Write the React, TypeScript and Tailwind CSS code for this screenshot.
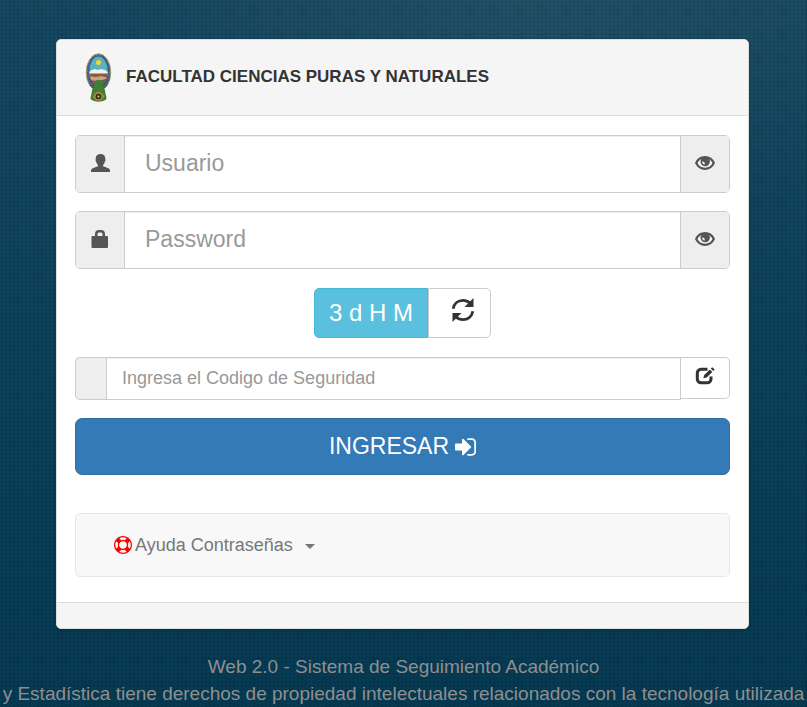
import { useState } from 'react'
import type { ReactNode } from 'react'

export default function App() {
  return (
    <div className="min-h-screen overflow-hidden bg-[radial-gradient(circle_at_center,rgba(0,25,45,0.2)_0_1px,transparent_2px),radial-gradient(circle_at_14px_11px,rgba(0,20,40,0.14)_0_1px,transparent_2px_3px,rgba(0,20,40,0.12)_4px,transparent_5px),radial-gradient(ellipse_420px_240px_at_65%_0,rgba(70,105,120,0.28),transparent),linear-gradient(#174a63,#0c435c_50%,#063b54)] bg-[length:4px_4px,24px_24px,100%_100%,100%_100%] pt-[39px] font-['Liberation_Sans',Arial,sans-serif] text-lg text-[#333]">
      <main className="mr-[58px] ml-14 overflow-hidden rounded-[5px] border border-[#ddd] bg-white shadow-sm">
        <header className="flex h-[76px] items-center border-b border-[#ddd] bg-[#f5f5f5] pl-7">
          <Escudo />
          <h1 className="ml-[14px] text-[17px] font-bold">FACULTAD CIENCIAS PURAS Y NATURALES</h1>
        </header>

        <form className="px-[18px] pt-[19px] pb-[25px]" onSubmit={(e) => e.preventDefault()}>
          <Campo id="usuario" label="Usuario" icon={<IconUser />} />
          <Campo id="password" label="Password" icon={<IconLock />} />

          <div className="mb-[19px] flex h-[50px] justify-center">
            <span className="flex w-[114px] items-center justify-center rounded-l-[5px] border border-[#46b8da] bg-[#5bc0de] text-2xl text-white">
              3 d H M
            </span>
            <button
              type="button"
              aria-label="Cambiar codigo"
              className="flex w-[63px] justify-center rounded-r-[5px] border border-[#ccc] bg-white pt-[9px] pl-[6px]"
            >
              <IconRefresh />
            </button>
          </div>

          <div className="mb-[18px] flex items-start">
            <span className="h-[43px] w-[31px] rounded-l-[5px] border border-r-0 border-[#ccc] bg-[#eee]" />
            <input
              id="codigo"
              type="text"
              aria-label="Codigo de Seguridad"
              placeholder="Ingresa el Codigo de Seguridad"
              className="h-[43px] min-w-0 flex-1 border border-[#ccc] bg-white px-[15px] text-lg shadow-[inset_0_1px_1px_rgba(0,0,0,0.075)] outline-none placeholder:text-[#999]"
            />
            <button
              type="button"
              aria-label="Editar"
              className="flex h-[42px] w-[49px] items-center justify-center rounded-r-[5px] border border-l-0 border-[#ccc] bg-white pb-1"
            >
              <IconEdit />
            </button>
          </div>

          <button
            type="submit"
            className="flex h-[57px] w-full items-center justify-center gap-[6px] rounded-[7px] border border-[#2e6da4] bg-[#337ab7] text-[23px] text-white"
          >
            INGRESAR
            <svg viewBox="128 256 1536 1280" width={21} height={18} fill="currentColor" aria-hidden="true">
              <path d="M1312 896q0 26-19 45l-544 544q-19 19-45 19t-45-19-19-45v-288h-448q-26 0-45-19t-19-45v-384q0-26 19-45t45-19h448v-288q0-26 19-45t45-19 45 19l544 544q19 19 19 45zm352-352v704q0 119-84.5 203.5t-203.5 84.5h-320q-13 0-22.5-9.5t-9.5-22.5q0-4-1-20t-.5-26.5 3-23.5 10-19.5 20.5-6.5h320q66 0 113-47t47-113v-704q0-66-47-113t-113-47h-312l-11.5-1-11.5-3-8-5.5-7-9-2-13.5q0-4-1-20t-.5-26.5 3-23.5 10-19.5 20.5-6.5h320q119 0 203.5 84.5t84.5 203.5z" />
            </svg>
          </button>

          <nav className="mt-[38px] flex h-16 items-center rounded-[5px] border border-[#e7e7e7] bg-[#f8f8f8] pl-[38px]">
            <button type="button" aria-haspopup="menu" className="flex items-center text-lg text-[#777]">
              <svg viewBox="0 0 1792 1792" width={18} height={18} fill="red" className="mr-[3px]" aria-hidden="true">
                <path d="M896 0q182 0 348 71t286 191 191 286 71 348-71 348-191 286-286 191-348 71-348-71-286-191-191-286-71-348 71-348 191-286 286-191 348-71zm0 128q-190 0-361 90l194 194q82-28 167-28t167 28l194-194q-171-90-361-90zm-678 1129l194-194q-28-82-28-167t28-167l-194-194q-90 171-90 361t90 361zm678 407q190 0 361-90l-194-194q-82 28-167 28t-167-28l-194 194q171 90 361 90zm0-384q159 0 271.5-112.5t112.5-271.5-112.5-271.5-271.5-112.5-271.5 112.5-112.5 271.5 112.5 271.5 271.5 112.5zm484-217l194 194q90-171 90-361t-90-361l-194 194q28 82 28 167t-28 167z" />
              </svg>
              Ayuda Contraseñas
              <span className="mt-[2px] ml-3 border-x-5 border-t-5 border-x-transparent border-t-[#777]" />
            </button>
          </nav>
        </form>

        <div className="h-[26px] border-t border-[#ddd] bg-[#f5f5f5]" />
      </main>

      <footer className="mt-6 flex flex-col items-center text-[19px] leading-[27px] whitespace-nowrap text-[#8f8f8f]">
        <p>Web 2.0 - Sistema de Seguimiento Académico</p>
        <p>n y Estadística tiene derechos de propiedad intelectuales relacionados con la tecnología utilizada e</p>
      </footer>
    </div>
  )
}

function Campo({ id, label, icon }: { id: string; label: string; icon: ReactNode }) {
  const [oculto, setOculto] = useState(id === 'password')

  return (
    <div className="mb-[18px] flex h-[58px] overflow-hidden rounded-[5px] border border-[#ccc] text-[#555] nth-[2]:mb-[19px]">
      <label
        htmlFor={id}
        aria-label={label}
        className="flex w-[49px] items-center justify-center border-r border-[#ccc] bg-[#eee] pb-[2px]"
      >
        {icon}
      </label>
      <input
        id={id}
        type={oculto ? 'password' : 'text'}
        placeholder={label}
        className="min-w-0 flex-1 bg-white px-5 text-[23px] shadow-[inset_0_1px_1px_rgba(0,0,0,0.075)] outline-none placeholder:text-[#999]"
      />
      <button
        type="button"
        aria-label={`Mostrar ${label}`}
        onClick={() => setOculto((o) => !o)}
        className="flex w-[49px] items-center justify-center border-l border-[#ccc] bg-[#eee] pb-[2px]"
      >
        <IconEye />
      </button>
    </div>
  )
}

function IconUser() {
  return (
    <svg width={19} height={18} viewBox="0 0 18 18" preserveAspectRatio="none" fill="currentColor" aria-hidden="true">
      <path d="M9 0C6.100 0 4.500 1.700 4.500 4.500c0 .7-.3 1-.2 1.800.1.800.5 1.100.7 1.800.3 1.300.8 2.100 1.500 2.800.2.800.1 1.300-.6 1.700C3.500 13.700.5 14.300 0 16V18h18v-2c-.5-1.700-3.500-2.300-5.900-3.400-.7-.4-.8-.9-.6-1.700.7-.7 1.200-1.500 1.500-2.800.2-.7.6-1 .7-1.800.1-.8-.2-1.100-.2-1.800C13.500 1.700 11.900 0 9 0Z" />
    </svg>
  )
}

function IconLock() {
  return (
    <svg width={18} height={18} viewBox="0 0 18 18" fill="currentColor" aria-hidden="true">
      <path
        fillRule="evenodd"
        d="M4 6V4a4 4 0 0 1 4-4h2a4 4 0 0 1 4 4v2h2a1 1 0 0 1 1 1v10a1 1 0 0 1-1 1H1.500a1 1 0 0 1-1-1V7a1 1 0 0 1 1-1Zm2.500 0h5V4a1.500 1.500 0 0 0-1.500-1.500H8A1.500 1.500 0 0 0 6.500 4Z"
      />
    </svg>
  )
}

function IconEye() {
  return (
    <svg width={20} height={14} viewBox="0 0 20 14" aria-hidden="true">
      <path d="M1.200 7C3 3.300 6 1.200 10 1.200s7 2.100 8.800 5.800c-1.800 3.700-4.800 5.800-8.800 5.800S3 10.700 1.200 7Z" fill="#f4f4f4" stroke="currentColor" strokeWidth="2.200" />
      <circle cx="10.200" cy="5.600" r="4.700" fill="currentColor" />
      <path d="M7.200 5.500c1.800-.2 2.800 1.200 2.600 2.900-1.600.2-2.700-1-2.600-2.900Z" fill="#f4f4f4" />
    </svg>
  )
}

function IconRefresh() {
  return (
    <svg width={24} height={24} viewBox="0 0 24 24" fill="none" aria-hidden="true">
      <path d="M2.200 10.800C3 5.500 7 2.300 12 2.300c3 0 5.200 1 7.200 2.900M21.800 13.200C21 18.500 17 21.700 12 21.700c-3 0-5.200-1-7.200-2.900" stroke="#333" strokeWidth="2.800" />
      <path d="M22.500 0v9h-9ZM1.500 24v-9h9Z" fill="#333" />
    </svg>
  )
}

function IconEdit() {
  return (
    <svg width={20} height={18} viewBox="0 0 20 18" fill="none" aria-hidden="true">
      <path d="M12.500 2.300H6a3.700 3.700 0 0 0-3.700 3.700v6A3.700 3.700 0 0 0 6 15.700h6.300A3.700 3.700 0 0 0 16 12V9.500" stroke="#333" strokeWidth="3" />
      <path d="m8.300 11.300.9-3.300 5.700-5.500 2.400 2.400-5.600 5.600ZM15.800 1.600 17.200.2l2.500 2.400-1.400 1.400Z" fill="#333" />
    </svg>
  )
}

/** Escudo: óvalo con paisaje andino y remate inferior verde. */
function Escudo() {
  return (
    <svg width={27} height={50} viewBox="0 0 27 50" role="img" aria-label="Escudo">
      <defs>
        <clipPath id="ovalo">
          <ellipse cx="13.500" cy="18.500" rx="9.300" ry="15" />
        </clipPath>
      </defs>
      <ellipse cx="13.500" cy="19.500" rx="12.300" ry="18.700" fill="#34507f" stroke="#b9a36a" strokeWidth="0.900" />
      <ellipse cx="13.500" cy="19" rx="10.700" ry="16.800" fill="none" stroke="#8fa0bd" strokeWidth="1" strokeDasharray="1 1.300" />
      <g clipPath="url(#ovalo)">
        <path d="M0 0h27v20H0z" fill="#55b3c4" />
        <path d="M3 20 7 17l3-1 3 1 3-1 4 1 4 3v3H3z" fill="#f2f0ec" />
        <path d="M3 20.500h21V36H3z" fill="#8a5a3e" />
        <path d="m3 23 8 1 5-1 8 2v2l-10 1-11-1z" fill="#c8a284" />
        <path d="m11 36 3-8 10-3v11z" fill="#5d6b38" />
      </g>
      <circle cx="13.500" cy="9.500" r="2.500" fill="#ffd51e" />
      <path d="M10 29c2-3 5-3 7 0l1 5 2 3c0 3 1.500 6 1.500 9-4 3.500-12 3.500-16 0 0-3 1.500-6 1.500-9l2-3z" fill="#3d8035" />
      <path d="M7.500 43.500 10 40l3.500-2 3.500 2 2.500 3.500-2.500 3-3.500 2-3.500-2z" fill="#a5852f" />
      <circle cx="13.500" cy="43.500" r="2.800" fill="#342e28" />
      <circle cx="13.500" cy="43.500" r="1" fill="#e9d18a" />
    </svg>
  )
}
